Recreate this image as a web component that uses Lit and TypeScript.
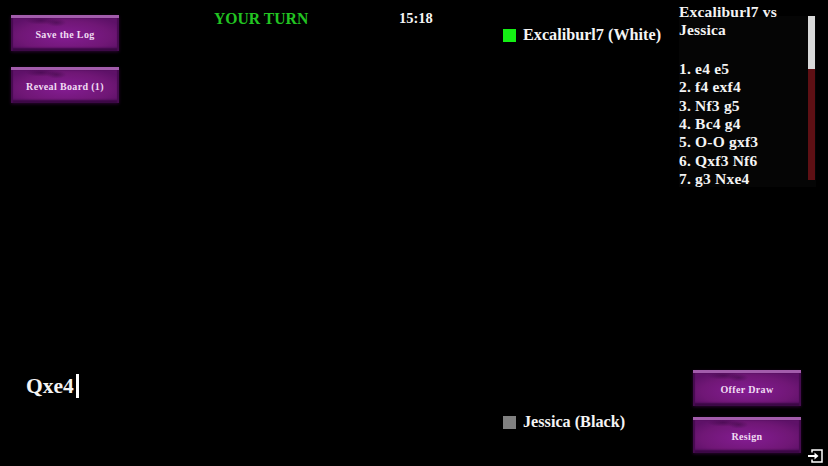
import { LitElement, html, css } from "lit";
import { customElement } from "lit/decorators.js";

const MOVES = ["1. e4 e5", "2. f4 exf4", "3. Nf3 g5", "4. Bc4 g4", "5. O-O gxf3", "6. Qxf3 Nf6", "7. g3 Nxe4"];

@customElement("game-button")
class GameButton extends LitElement {
  static styles = css`
    :host { display: block; width: 108px; height: 36px; }
    .btn {
      all: unset; box-sizing: border-box; display: flex; align-items: center; justify-content: center;
      width: 100%; height: 100%; color: #f0dcf2; cursor: pointer;
      font: bold 10px/1 "Liberation Serif", serif; letter-spacing: 0.35px;
      border-top: 3px solid #a25cab;
      background:
        radial-gradient(ellipse 16px 4px at 28% 8%, rgba(40,0,50,.4), transparent),
        radial-gradient(ellipse 10px 4px at 42% 14%, rgba(30,0,40,.35), transparent),
        radial-gradient(ellipse 60% 65% at 50% 55%, #841c92, #701776 70%, #5e1168);
      box-shadow: inset 2px 0 1px #460c50, inset -2px 0 1px #460c50, inset 0 -3px 2px #3a0844, 0 1px 3px #2a0530;
    }
  `;
  render() {
    return html`<button class="btn"><slot></slot></button>`;
  }
}

@customElement("app-root")
class AppRoot extends LitElement {
  static styles = css`
    :host { display: block; position: relative; isolation: isolate; width: 828px; height: 466px; background: #000; overflow: hidden;
      font-family: "Liberation Serif", serif; font-weight: bold; color: #f4f4f4; }
    .page { display: grid; grid-template-columns: 214px 185px 104px 176px 149px; height: 100%; }
    .col { display: flex; flex-direction: column; justify-content: space-between; min-width: 0; }
    .left { padding: 15px 0 68px 11px; }
    .stack { display: flex; flex-direction: column; gap: 16px; }
    .entry { display: flex; align-items: center; margin-left: 15px; font-size: 21.5px; line-height: 24px; height: 24px; }
    .caret { width: 3px; height: 24px; background: #fff; margin-left: 2px; }
    .turn { padding-top: 9px; color: #22c422; font-size: 15.7px; line-height: 19px; white-space: nowrap; }
    .clock { padding-top: 9px; font-size: 14.5px; line-height: 19px; }
    .players { padding: 25px 0 34px; }
    .player { display: flex; align-items: center; gap: 7px; font-size: 16.2px; line-height: 20px; white-space: nowrap; }
    .sq { width: 13px; height: 13px; flex: none; }
    .white { background: #14f014; }
    .black { background: #808080; }
    .side { padding-right: 27px; }
    .log { position: relative; margin-top: 3px; height: 185px; }
    .title, .moves { font-size: 15.5px; line-height: 18.4px; white-space: nowrap; letter-spacing: 0.2px; }
    .title { margin-bottom: 20px; }
    .panel { display: flex; flex-direction: column; }
    .track { position: absolute; left: 129px; top: 13px; width: 7px; height: 164px; background: #5e1014; }
    .thumb { width: 100%; height: 53px; background: #d9d9d9; }
    .shade { position: absolute; left: 0; top: 13px; width: 137px; height: 171px; background: #050505; z-index: -1; }
    .bottom-btns { display: flex; flex-direction: column; gap: 11px; margin: 0 0 13px 14px; }
    .exit { position: absolute; left: 808px; top: 449px; width: 15px; height: 14px; color: #fff; }
  `;
  render() {
    return html`
      <div class="page">
        <div class="col left">
          <div class="stack">
            <game-button>Save the Log</game-button>
            <game-button>Reveal Board (1)</game-button>
          </div>
          <div class="entry">Qxe4<span class="caret"></span></div>
        </div>
        <div class="col"><div class="turn">YOUR TURN</div></div>
        <div class="col"><div class="clock">15:18</div></div>
        <div class="col players">
          <div class="player"><span class="sq white"></span>Excaliburl7 (White)</div>
          <div class="player"><span class="sq black"></span>Jessica (Black)</div>
        </div>
        <div class="col side">
          <div class="log panel">
            <div class="shade"></div>
            <div class="title">Excaliburl7 vs<br />Jessica</div>
            <div class="moves">${MOVES.map((m) => html`<div>${m}</div>`)}</div>
            <div class="track"><div class="thumb"></div></div>
          </div>
          <div class="bottom-btns">
            <game-button>Offer Draw</game-button>
            <game-button>Resign</game-button>
          </div>
        </div>
      </div>
      <svg class="exit" viewBox="0 0 15 14" fill="none" stroke="currentColor" stroke-width="1.5">
        <path d="M4 3.5V1h10v12H4v-2.5" />
        <path d="M0 7h9" stroke-width="2" />
        <path d="M6.5 3.5 10.5 7l-4 3.5z" fill="currentColor" stroke="none" />
      </svg>
    `;
  }
}
